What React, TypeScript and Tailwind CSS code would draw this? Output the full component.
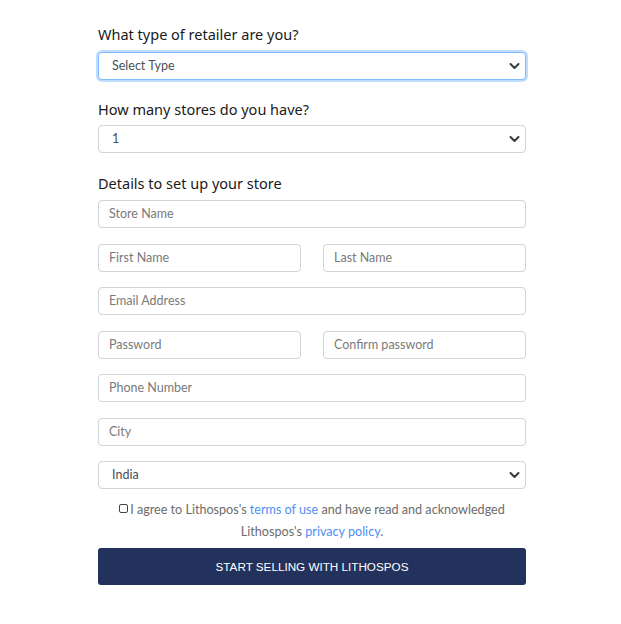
import React from "react";

const Chevron = () => (
  <svg width="11" height="8" viewBox="0 0 11 8" className="absolute right-[5px] top-1/2 -translate-y-1/2">
    <path d="M1.5 2 L5.5 6 L9.5 2" fill="none" stroke="#343a40" strokeWidth="2" strokeLinecap="round" strokeLinejoin="round" />
  </svg>
);

const heading = "text-[14.5px] text-[#1a1a1a] leading-[20px]";
const fieldFont = { fontFamily: "'Lato', 'Liberation Sans', sans-serif" };

function Input({ placeholder }: { placeholder: string }) {
  return (
    <div className="h-[28px] rounded-[4px] border border-[#ced4da] bg-white flex items-center pl-[10px] pt-[1px] text-[12.5px] text-[#7a7a7a]" style={fieldFont}>
      {placeholder}
    </div>
  );
}

function Select({ value, focused }: { value: string; focused?: boolean }) {
  return (
    <div
      className={
        "relative h-[28px] rounded-[4px] border bg-white flex items-center pl-[13px] pt-[1px] text-[12.5px] text-[#495057] " +
        (focused ? "border-[#80bdff] shadow-[0_0_0_2px_rgba(0,123,255,0.25)]" : "border-[#ced4da]")
      }
      style={fieldFont}
    >
      {value}
      <Chevron />
    </div>
  );
}

export default function App() {
  return (
    <div className="w-[621px] h-[624px] bg-white" style={{ fontFamily: "'Noto Sans', sans-serif" }}>
      <div className="ml-[98px] w-[428px] pt-[24px]">
        <div className={heading}>What type of retailer are you?</div>
        <div className="mt-[8px]">
          <Select value="Select Type" focused />
        </div>
        <div className={heading + " mt-[19px]"}>How many stores do you have?</div>
        <div className="mt-[6px]">
          <Select value="1" />
        </div>
        <div className={heading + " mt-[20px]"}>Details to set up your store</div>
        <div className="mt-[7px] flex flex-col gap-[15.5px]">
          <Input placeholder="Store Name" />
          <div className="grid grid-cols-2 gap-[22px]">
            <Input placeholder="First Name" />
            <Input placeholder="Last Name" />
          </div>
          <Input placeholder="Email Address" />
          <div className="grid grid-cols-2 gap-[22px]">
            <Input placeholder="Password" />
            <Input placeholder="Confirm password" />
          </div>
          <Input placeholder="Phone Number" />
          <Input placeholder="City" />
          <Select value="India" />
        </div>
        <div className="mt-[10px] text-center text-[12.6px] leading-[22px] text-[#6c6c6c]" style={fieldFont}>
          <span className="inline-block w-[9px] h-[9px] border border-[#444] rounded-[2px] mr-[2px] align-[1px]" />
          I agree to Lithospos's <span className="text-[#4f8ef7]">terms of use</span> and have read and acknowledged
          <br />
          Lithospos's <span className="text-[#4f8ef7]">privacy policy</span>.
        </div>
        <div
          className="mt-[5px] h-[37px] rounded-[3px] bg-[#22325c] flex items-center justify-center text-white text-[11.7px]"
          style={{ fontFamily: "'Liberation Sans', Arial, sans-serif" }}
        >
          START SELLING WITH LITHOSPOS
        </div>
      </div>
    </div>
  );
}
